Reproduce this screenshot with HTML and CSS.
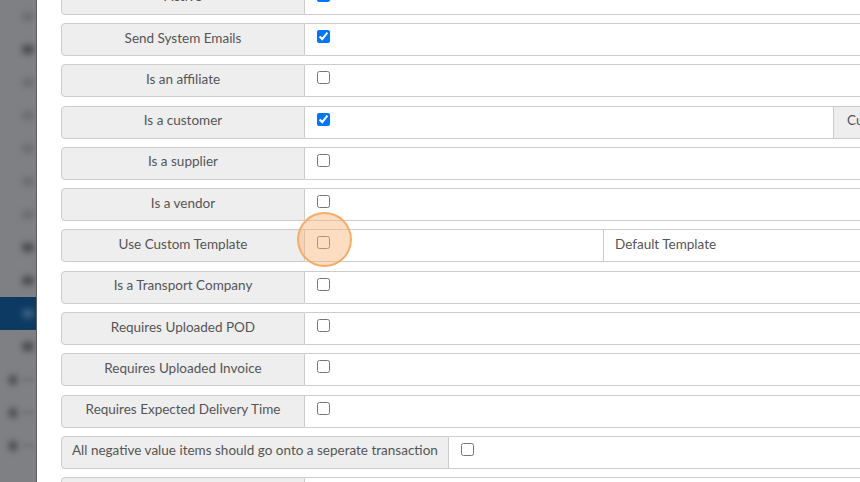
FILE: index.html
```html
<!DOCTYPE html>
<html lang="en">
<head>
    <meta charset="UTF-8">
    <meta name="viewport" content="width=device-width, initial-scale=1.0">
    <title>Account Settings</title>
    <link rel="stylesheet" href="styles.css">
</head>
<body>
    <div class="layout">
        <nav class="sidebar">
            <div class="nav-item"><span class="dot faint"></span></div>
            <div class="nav-item"><span class="dot"></span></div>
            <div class="nav-item"><span class="dot faint"></span></div>
            <div class="nav-item"><span class="dot faint"></span></div>
            <div class="nav-item"><span class="dot faint"></span></div>
            <div class="nav-item"><span class="dot faint"></span></div>
            <div class="nav-item"><span class="dot faint"></span></div>
            <div class="nav-item"><span class="dot"></span></div>
            <div class="nav-item"><span class="dot"></span></div>
            <div class="nav-item active"><span class="dot light"></span></div>
            <div class="nav-item"><span class="dot"></span></div>
            <div class="nav-item sub"><span class="dot"></span><span class="line"></span></div>
            <div class="nav-item sub"><span class="dot"></span><span class="line"></span></div>
            <div class="nav-item sub"><span class="dot"></span><span class="line"></span></div>
        </nav>

        <main class="content">
            <div class="fields">
                <div class="field">
                    <span class="addon">Active</span>
                    <div class="cell"><input type="checkbox" checked></div>
                </div>
                <div class="field">
                    <span class="addon">Send System Emails</span>
                    <div class="cell"><input type="checkbox" checked></div>
                </div>
                <div class="field">
                    <span class="addon">Is an affiliate</span>
                    <div class="cell"><input type="checkbox"></div>
                </div>
                <div class="field">
                    <span class="addon">Is a customer</span>
                    <div class="cell cell-customer"><input type="checkbox" checked></div>
                    <span class="addon addon-end">Customer Code</span>
                </div>
                <div class="field">
                    <span class="addon">Is a supplier</span>
                    <div class="cell"><input type="checkbox"></div>
                </div>
                <div class="field">
                    <span class="addon">Is a vendor</span>
                    <div class="cell"><input type="checkbox"></div>
                </div>
                <div class="field">
                    <span class="addon">Use Custom Template</span>
                    <div class="cell cell-template"><input type="checkbox"></div>
                    <div class="select">Default Template</div>
                </div>
                <div class="field">
                    <span class="addon">Is a Transport Company</span>
                    <div class="cell"><input type="checkbox"></div>
                </div>
                <div class="field">
                    <span class="addon">Requires Uploaded POD</span>
                    <div class="cell"><input type="checkbox"></div>
                </div>
                <div class="field">
                    <span class="addon">Requires Uploaded Invoice</span>
                    <div class="cell"><input type="checkbox"></div>
                </div>
                <div class="field">
                    <span class="addon">Requires Expected Delivery Time</span>
                    <div class="cell"><input type="checkbox"></div>
                </div>
                <div class="field">
                    <span class="addon addon-wide">All negative value items should go onto a seperate transaction</span>
                    <div class="cell"><input type="checkbox"></div>
                </div>
                <div class="field">
                    <span class="addon">&nbsp;</span>
                    <div class="cell"></div>
                </div>
            </div>
        </main>
    </div>

    <div class="click-marker"></div>
</body>
</html>
```

FILE: styles.css
```css
body {
    margin: 0;
    font-family: Lato, "Open Sans", sans-serif;
    font-size: 13.5px;
    color: #555;
    background-color: #fff;
    overflow: hidden;
}
.layout {
    display: flex;
    height: 482px;
}
.sidebar {
    width: 36px;
    flex-shrink: 0;
    display: flex;
    flex-direction: column;
    background-color: #7f8083;
    border-right: 1px solid #5e5f61;
    overflow: hidden;
}
.nav-item {
    height: 33px;
    flex-shrink: 0;
    display: flex;
    align-items: center;
    justify-content: flex-end;
    padding-right: 2px;
}
.nav-item.active {
    background-color: #0d3a62;
}
.dot {
    width: 12px;
    height: 9px;
    border-radius: 4px;
    background-color: #48494c;
    filter: blur(3px);
}
.dot.faint {
    background-color: #6b6c6f;
}
.dot.light {
    background-color: #3b6283;
}
.nav-item.sub {
    justify-content: flex-start;
    padding-left: 9px;
    gap: 6px;
}
.nav-item.sub .dot {
    width: 10px;
    height: 10px;
}
.line {
    width: 14px;
    height: 3px;
    background-color: #6e6f72;
    filter: blur(2px);
}
.content {
    flex: 1;
    padding-left: 24px;
    overflow: hidden;
}
.fields {
    display: flex;
    flex-direction: column;
    gap: 8.3px;
    width: 1000px;
    margin-top: -18.3px;
}
.field {
    display: flex;
    height: 33px;
}
.addon {
    width: 244px;
    flex-shrink: 0;
    box-sizing: border-box;
    display: flex;
    align-items: center;
    justify-content: center;
    padding-bottom: 4px;
    background-color: #eee;
    border: 1px solid #ccc;
    border-radius: 4px 0 0 4px;
    white-space: nowrap;
}
.addon-wide {
    width: auto;
    padding: 0 10px 4px;
}
.addon-end {
    width: 180px;
    justify-content: flex-start;
    padding-left: 13px;
    border-left: 1px solid #ccc;
    border-radius: 0;
}
.cell {
    flex: 1;
    box-sizing: border-box;
    display: flex;
    align-items: flex-start;
    border: 1px solid #ccc;
    border-left: none;
    padding: 6px 12px;
}
.cell-customer {
    flex: none;
    width: 528px;
    border-right: none;
}
.cell-template {
    flex: none;
    width: 299px;
}
.cell input {
    margin: 0;
    width: 13px;
    height: 13px;
}
.select {
    flex: 1;
    box-sizing: border-box;
    display: flex;
    align-items: center;
    padding-left: 11px;
    padding-bottom: 4px;
    border: 1px solid #ccc;
    border-left: none;
}
.click-marker {
    position: absolute;
    left: 297px;
    top: 212px;
    width: 51px;
    height: 51px;
    border-radius: 50%;
    border: 2px solid rgba(245, 165, 90, 0.85);
    background-color: rgba(250, 180, 120, 0.45);
}
```
